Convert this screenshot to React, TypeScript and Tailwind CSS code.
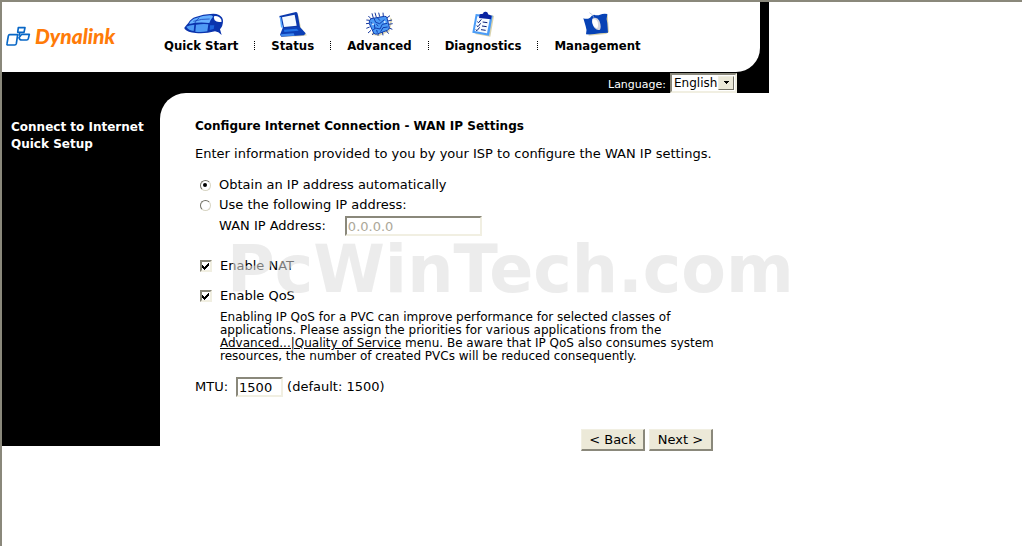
import { useState } from "react";
import type { InputHTMLAttributes, ReactNode } from "react";

const sunken = "border-2 border-t-[#8a887b] border-l-[#8a887b] border-r-[#f1efe2] border-b-[#f1efe2] bg-white";

export default function App() {
  return (
    <div className="min-h-screen border-t-2 border-l-2 border-[#8a887b] bg-white font-['Verdana','DejaVu_Sans',sans-serif] text-[13px] leading-4 text-black">
      <div className="w-full max-w-[767px]">
        <Header />
        <div className="flex items-start bg-white">
          <Sidebar />
          <WanSettings />
        </div>
      </div>
    </div>
  );
}

/* ---------------------------------------------------------------------- */

const tabs: { label: string; icon: ReactNode }[] = [
  { label: "Quick Start", icon: <MouseIcon /> },
  { label: "Status", icon: <LaptopIcon /> },
  { label: "Advanced", icon: <ChipIcon /> },
  { label: "Diagnostics", icon: <ClipboardIcon /> },
  { label: "Management", icon: <FolderIcon /> },
];

function Header() {
  return (
    <header className="bg-black">
      <div className="mr-[9px] flex rounded-br-[24px] bg-white pb-[18px]">
        <a href="#home" className="flex w-[162px] items-start gap-1 pt-[22px] pl-1">
          <LogoMark />
          <span className="font-['Lato',sans-serif] text-[21px] leading-6 font-black text-[#ff7b08] italic">
            Dynalink
          </span>
        </a>
        <nav className="flex items-end gap-4 pt-2">
          {tabs.map((t, i) => (
            <div key={t.label} className="flex items-end gap-4">
              {i > 0 && <span className="mb-1 h-[9px] border-l border-dotted border-black" />}
              <a
                href="#tab"
                className="flex flex-col items-center font-['DejaVu_Sans_Condensed','DejaVu_Sans',sans-serif] font-bold whitespace-nowrap"
              >
                <span className="flex h-7 items-center">{t.icon}</span>
                {t.label}
              </a>
            </div>
          ))}
        </nav>
      </div>
      <div className="flex h-[21px] items-center justify-end gap-1 pr-8 text-white">
        <label htmlFor="language" className="pt-1 text-[11px]">
          Language:
        </label>
        <div className="grid">
          <select
            id="language"
            className={`${sunken} col-start-1 row-start-1 h-5 w-[67px] appearance-none pl-[2px] text-[12px] leading-4 text-black`}
          >
            <option>English</option>
          </select>
          <span className="pointer-events-none col-start-1 row-start-1 mr-[3px] grid h-[14px] w-4 place-items-center self-center justify-self-end border border-t-[#f1efe2] border-r-[#716f64] border-b-[#716f64] border-l-[#f1efe2] bg-[#ece9d8]">
            <svg width="5" height="3" viewBox="0 0 5 3" shapeRendering="crispEdges">
              <path d="M0 0h5v1h-1v1h-1v1h-1v-1h-1v-1h-1z" />
            </svg>
          </span>
        </div>
      </div>
    </header>
  );
}

function Sidebar() {
  return (
    <aside className="min-h-[353px] w-[158px] shrink-0 bg-black pt-[26px] pl-[9px] text-[12px] leading-[17px] font-bold text-white">
      <a href="#connect" className="block whitespace-nowrap">
        Connect to Internet
      </a>
      <a href="#setup" className="block">
        Quick Setup
      </a>
    </aside>
  );
}

function WanSettings() {
  const [mode, setMode] = useState("auto");

  return (
    <div className="min-w-0 flex-1 bg-black">
      <main className="relative rounded-tl-[26px] bg-white pt-[25px] pl-[35px]">
        <h1 className="text-[12px] font-bold">Configure Internet Connection - WAN IP Settings</h1>
        <p className="mt-3">Enter information provided to you by your ISP to configure the WAN IP settings.</p>

        <div className="mt-[13px] pl-1">
          <label className="flex h-5 items-center gap-2">
            <Radio name="mode" checked={mode === "auto"} onChange={() => setMode("auto")} />
            Obtain an IP address automatically
          </label>
          <label className="flex h-5 items-center gap-2">
            <Radio name="mode" checked={mode === "static"} onChange={() => setMode("static")} />
            Use the following IP address:
          </label>
          <div className="mt-px flex items-center gap-[19px] pl-5">
            <label htmlFor="wan-ip">WAN IP Address:</label>
            <input
              id="wan-ip"
              defaultValue="0.0.0.0"
              disabled={mode === "auto"}
              className={`${sunken} h-5 w-[137px] px-px disabled:text-[#aca899]`}
            />
          </div>
        </div>

        <div className="mt-5 pl-1">
          <label className="flex h-5 items-center gap-2">
            <Checkbox />
            Enable NAT
          </label>
          <label className="mt-[10px] flex h-5 items-center gap-2">
            <Checkbox />
            Enable QoS
          </label>
          <p className="mt-[5px] pl-[21px] text-[12px] leading-[13px]">
            Enabling IP QoS for a PVC can improve performance for selected classes of
            <br />
            applications. Please assign the priorities for various applications from the
            <br />
            <a href="#qos" className="underline">
              Advanced...|Quality of Service
            </a>{" "}
            menu. Be aware that IP QoS also consumes system
            <br />
            resources, the number of created PVCs will be reduced consequently.
          </p>
        </div>

        <div className="mt-[14px] flex items-center">
          <label htmlFor="mtu">MTU:</label>
          <input id="mtu" defaultValue="1500" className={`${sunken} mr-1 ml-2 h-5 w-[47px] px-px`} />
          (default: 1500)
        </div>

        <div className="mt-8 flex justify-end gap-1 pr-14">
          <Button>&lt; Back</Button>
          <Button>Next &gt;</Button>
        </div>

        <div className="pointer-events-none absolute top-[138px] left-[67px] font-['DejaVu_Sans',sans-serif] text-[65px] leading-[78px] font-bold text-[#dcdcdc]/55">
          PcWinTech.com
        </div>
      </main>
    </div>
  );
}

/* ---------------------------------------------------------------------- */

function Button({ children }: { children: ReactNode }) {
  return (
    <button
      type="button"
      className="h-[22px] w-16 border-t border-r-2 border-b-2 border-l border-t-[#f1efe2] border-r-[#8a887b] border-b-[#8a887b] border-l-[#f1efe2] bg-[#ece9d8]"
    >
      {children}
    </button>
  );
}

function Radio(props: InputHTMLAttributes<HTMLInputElement>) {
  return (
    <span className="grid size-3 place-items-center">
      <input
        type="radio"
        className="peer col-start-1 row-start-1 size-[11px] appearance-none rounded-full border border-t-[#716f64] border-r-[#d8d5c4] border-b-[#d8d5c4] border-l-[#716f64] bg-white"
        {...props}
      />
      <span className="pointer-events-none z-10 col-start-1 row-start-1 hidden size-1 rounded-full bg-black peer-checked:block" />
    </span>
  );
}

function Checkbox() {
  return (
    <span className="grid size-[13px] place-items-center">
      <input
        type="checkbox"
        defaultChecked
        className={`${sunken} peer col-start-1 row-start-1 size-3 appearance-none`}
      />
      <svg
        width="7"
        height="7"
        viewBox="0 0 7 7"
        shapeRendering="crispEdges"
        className="pointer-events-none z-10 col-start-1 row-start-1 hidden peer-checked:block"
      >
        <path d="M0 2h1v1h1v1h1v-1h1v-1h1v-1h1v-1h1v3h-1v1h-1v1h-1v1h-1v1h-1v-1h-1v-1h-1z" />
      </svg>
    </span>
  );
}

function LogoMark() {
  return (
    <svg width="25" height="21" viewBox="16 76 75 63" className="mt-[2px] shrink-0" fill="none" stroke="#0867c6" strokeWidth="5" strokeLinejoin="round">
      <path d="M27 102h24l-4 27q-1 4-5 4H22q-4 0-3-4l4-23q1-4 4-4z" />
      <path d="M53 81h20l-3 14H51z" />
      <path d="M63 101h23l-3 13q-1 4-5 4H63q-6 0-8-7z" />
      <path d="M58 95l-3 10" />
    </svg>
  );
}

function MouseIcon() {
  return (
    <svg width="39" height="23" viewBox="91 36 117 69" className="ml-1">
      <path d="M92 80q6-8 12-14 8-14 22-18 24-9 44-9 16-2 26 3 12 6 12 18 0 15-9 25l5 17q-10-10-20-11-30 8-58 5-24-1-33-12z" fill="#0b34ad" />
      <path d="M98 77q8-5 24-6l-2 19q-15-2-22-13z" fill="#4f9bf5" />
      <path d="M127 71q22-3 37-1l-3 21q-18 4-36 1z" fill="#4f9bf5" />
      <path d="M106 69q6-14 22-18 20-7 40-8 9 0 10 4-8 9-11 19-32-4-61 3z" fill="#68b1ff" />
      <path d="M181 46q10-3 18 4 5 5 5 12-14 3-21-4-4-5-2-12z" fill="#fff" />
      <path d="M169 73l-1 14 12-3 2-11z" fill="#1e64dd" />
      <path d="M122 70q3-12 15-20M119 61q25-8 49-7" fill="none" stroke="#0b34ad" strokeWidth="2" />
    </svg>
  );
}

function LaptopIcon() {
  return (
    <svg width="28" height="26" viewBox="373 34 84 78">
      <path d="M431 44l8 42 18 21-20 3-58 1 4-5 46-4z" fill="#d9d3ad" />
      <path d="M374 49l50-12q4 0 5 5l7 41-50 4z" fill="#0a38ad" />
      <path d="M382 53l38-8 6 33-38 4z" fill="#f5faff" />
      <path d="M375 52l4 31 6 3-6-34z" fill="#5aa8ff" />
      <path d="M384 85l51-4 18 20-5 6-68 4-4-6z" fill="#0b3fb6" />
      <path d="M388 90l38-3 6 6-43 4z" fill="#2272e6" />
      <path d="M378 104l39-3 3 7-40 2z" fill="#3c85ec" />
    </svg>
  );
}

function ChipIcon() {
  return (
    <svg width="28" height="26" viewBox="627 34 84 78">
      <path d="M646 100l53-13 4-34 6 7-8 35-32 14-20-3z" fill="#ded8b3" />
      <path d="M646 58l-9-9M652 55l-4-14M661 53l-4-14M671 51l-3-12M682 50l-1-11M692 55l10-7M696 64l12-3M698 74l12-2M697 84l12 5M690 92l8 10M679 96l2 11M667 99l-1 9M654 98l-5 8M645 92l-9 8M641 82l-10 4M640 71l-10 1M641 62l-10-1" stroke="#173aa0" strokeWidth="3" />
      <path d="M645 57l40-7q7-1 8 5l7 28q0 6-6 9l-30 11q-7 2-11-3l-13-28q-2-9 5-15z" fill="#4b9af5" stroke="#123cad" strokeWidth="3" />
      <path d="M654 56l5 12 12 4 14-12M663 53l9 10M644 68l11 7 2 13M650 92l9-7 13 3 7-14 15-3M664 99l-2-8M674 96l7-12 14-2M667 79l-6-5" fill="none" stroke="#123cad" strokeWidth="3" />
      <circle cx="651" cy="74" r="3" fill="#d9edff" />
      <circle cx="686" cy="67" r="3" fill="#d9edff" />
    </svg>
  );
}

function ClipboardIcon() {
  return (
    <svg width="22" height="26" viewBox="203 34 66 78">
      <path d="M262 46l7 3-11 62-46-8z" fill="#d9d3ad" />
      <path d="M214 43l51 5-11 60-50-9z" fill="#4b9cf7" />
      <path d="M219 50l38 4-9 47-37-7z" fill="#f7fbff" />
      <path d="M224 55l2-11 10-2q1-7 8-6 7 0 7 8l11 4-2 11z" fill="#0822a0" />
      <path d="M219 66l4 3 8-10M217 78l4 3 8-10M214 90l4 3 8-10M235 67l14 2M233 79l14 2M230 90l14 2" fill="none" stroke="#081f78" strokeWidth="3" />
    </svg>
  );
}

function FolderIcon() {
  return (
    <svg width="26" height="24" viewBox="533 34 78 72" className="mr-1">
      <path d="M601 42h6l4 52-9 6-53 5z" fill="#d9d3ad" />
      <path d="M534 53q11 4 20-2 5-8 12-9 10 4 18 0 10-4 22-2-4 14 0 28l2 28q-12 0-24 2-20 4-42 3 4-12-1-24z" fill="#0742b5" />
      <path d="M561 54q13-7 21 6 7 18 2 27-8 4-16-5-11-16-7-28z" fill="#d3d5de" />
      <path d="M562 56q12-3 15 9 3 13-2 18-8-1-12-11-3-10-1-16z" fill="#fff" />
      <path d="M566 52q-1-10-14-16" fill="none" stroke="#a9b6d0" strokeWidth="2" />
    </svg>
  );
}
